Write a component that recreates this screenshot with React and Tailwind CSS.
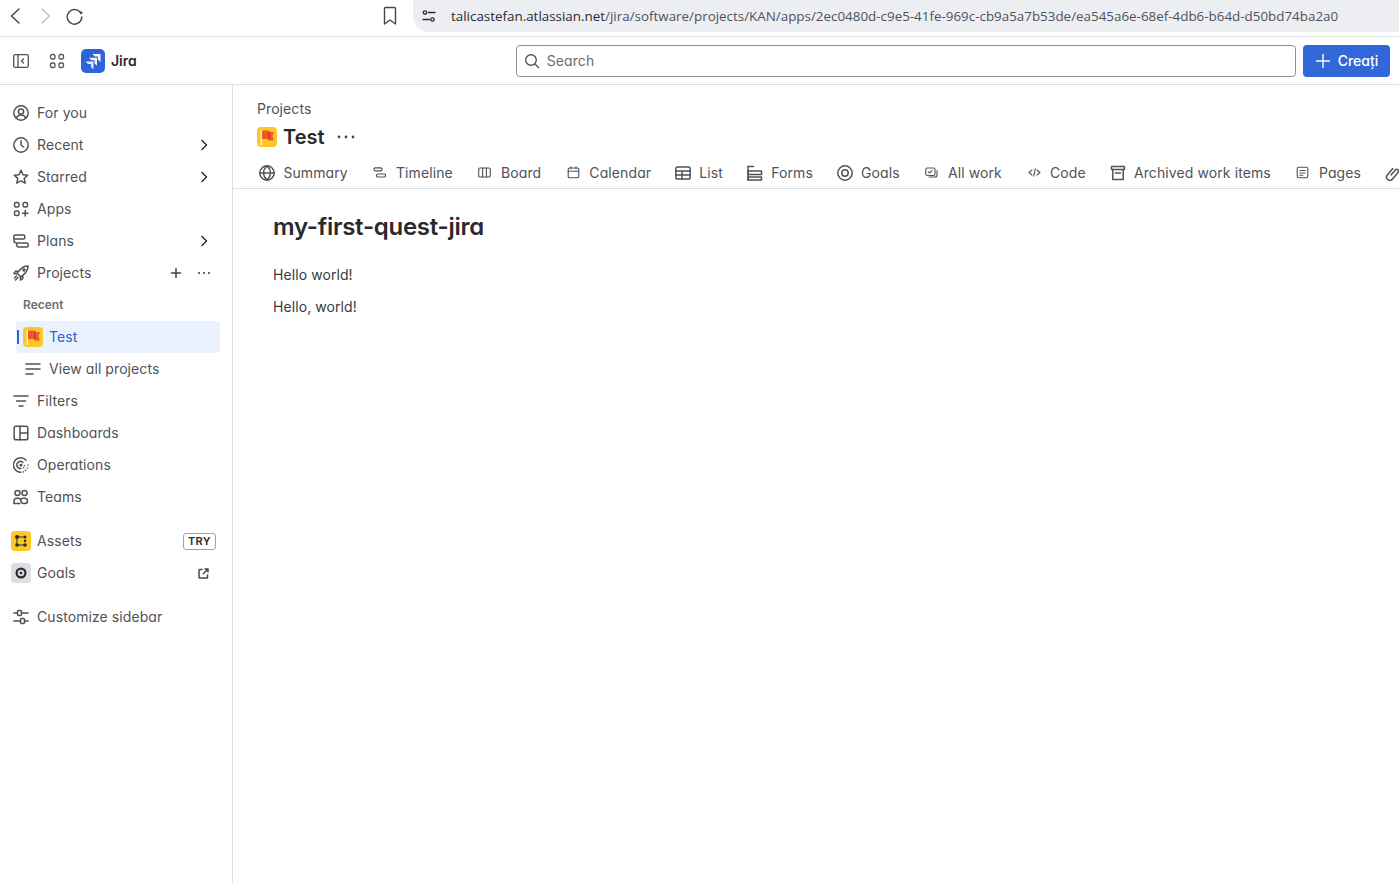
import React from "react";

const S = ({ children, size = 16, vb = 16, cls = "" }) => (
  <svg width={size} height={size} viewBox={`0 0 ${vb} ${vb}`} fill="none" stroke="currentColor" strokeWidth="1.5" strokeLinecap="round" strokeLinejoin="round" className={`shrink-0 ${cls}`}>
    {children}
  </svg>
);

const Ic = {
  user: <S><circle cx="8" cy="8" r="7.2" /><circle cx="8" cy="6.5" r="2.6" /><path d="M3.4 13c.6-2 2.2-3 4.6-3s4 1 4.6 3" /></S>,
  clock: <S><circle cx="8" cy="8" r="7.2" /><path d="M8 3.8V8l2.6 2" /></S>,
  star: <S><path d="M8 1.2l2 4.5 4.8.5-3.6 3.2 1 4.8L8 11.9l-4.2 2.3 1-4.8L1.2 6.2 6 5.7z" /></S>,
  apps: <S><rect x="1.5" y="1.5" width="4.5" height="4.5" rx="1.5" /><rect x="10" y="1.5" width="4.5" height="4.5" rx="1.5" /><rect x="1.5" y="10" width="4.5" height="4.5" rx="1.5" /><path d="M12.2 9.5v5.5M9.5 12.2H15" /></S>,
  plans: <S><rect x="0.8" y="2" width="11" height="4" rx="1.5" /><rect x="3.8" y="10" width="11.4" height="4" rx="1.5" /><path d="M1 6v2c0 1.200.8 2 2.800 2" /></S>,
  rocket: <S><path d="M15 1c-4 0-6.500 1.500-9 5L4 8l4 4 2-2c3.500-2.500 5-5 5-9z" /><path d="M5.500 6.200H2.500L1 8.500l3 .3M9.800 10.500v3l-2.300 1.500-.3-3" /><path d="M3.500 11l-2 2M5 12.500L2.500 15" /><circle cx="11" cy="5" r="1" /></S>,
  filter: <S><path d="M1 3h14M3.500 8h9M6 13h4" /></S>,
  listLines: <S><path d="M1 3h14M1 8h14M1 13h7" /></S>,
  dash: <S><rect x="1.200" y="1.200" width="13.600" height="13.600" rx="1.800" /><path d="M7 1.200v13.600M7 8h7.800" /></S>,
  ops: <S><path d="M13 3.200A7.200 7.200 0 1 0 8 15.200" /><path d="M10 5.500A3.600 3.600 0 1 0 8 11.500" /><circle cx="8" cy="8" r="0.800" /><path d="M15 8v.1M14.300 11v.1M12.500 13.300v.1M10.500 14.800v.1M11.500 8.500v.1M10.700 10.600v.1" /></S>,
  teams: <S><circle cx="4.500" cy="4" r="2.500" /><circle cx="11.500" cy="4" r="2.500" /><path d="M1 14.500v-2.200c0-1.800 1.200-3 3-3h1.500c1.500 0 2 1 2.500 2.700.500 1.700 1 2.500 2.500 2.500h1c1.500 0 3-.5 3-2.200 0-1.800-1.200-3-3-3h-1.500c-1 0-1.800.5-2.200 1.500" /><path d="M1 14.500h6" /></S>,
  custom: <S><path d="M0.800 4h3.700M8.500 4h6.700M0.800 12h6.700M11.500 12h3.700" /><rect x="4.500" y="1.500" width="4" height="5" rx="1" /><rect x="7.500" y="9.500" width="4" height="5" rx="1" /></S>,
  chev: <S size={16}><path d="M6 3.500L10.500 8 6 12.500" /></S>,
  globe: <S><circle cx="8" cy="8" r="7.200" /><path d="M.8 8h14.400M8 .8c-4.500 4.500-4.500 9.900 0 14.400M8 .8c4.500 4.500 4.500 9.900 0 14.400" /></S>,
  timeline: <S size={13} vb={13}><rect x="1" y="1.800" width="8" height="3" rx="1.300" strokeWidth="1.200" /><rect x="3.500" y="8" width="9" height="3" rx="1.300" strokeWidth="1.200" /></S>,
  board: <S size={13} vb={13}><rect x="0.700" y="2" width="11.600" height="9" rx="1.300" strokeWidth="1.100" /><path d="M4.600 2v9M8.400 2v9" strokeWidth="1.100" /></S>,
  cal: <S size={13} vb={13}><rect x="1.200" y="2" width="10.600" height="9.800" rx="1.300" strokeWidth="1.100" /><path d="M1.200 5.200h10.600M4 .8v2M9 .8v2" strokeWidth="1.100" /></S>,
  list: <S><rect x="0.800" y="2" width="14.400" height="12" rx="1.800" /><path d="M.8 6h14.400M.8 10h14.400M7 6v8" /></S>,
  forms: <S><path d="M1 1.500h5.500M1 6h13.500v3.500H1zM1 12h13.500v3H1z" /><path d="M1 1.500V15" /></S>,
  target: <S><circle cx="8" cy="8" r="7.200" /><circle cx="8" cy="8" r="3.200" /></S>,
  allwork: <S size={13} vb={13}><rect x="0.800" y="2" width="9.200" height="7.500" rx="1.500" strokeWidth="1.100" /><path d="M3.500 5.800l1.200 1.200 2.300-2.400" strokeWidth="1.100" /><path d="M12 4.500v4.500c0 1.400-.7 2-2 2H4" strokeWidth="1.100" /></S>,
  code: <S size={13} vb={13}><path d="M4 3.800L1 6.500l3 2.500M9 4l3 2.500L9 9M7.300 2.800L5.700 10.200" strokeWidth="1.100" /></S>,
  archive: <S><rect x="1.500" y="1.500" width="13" height="3" rx="0.500" /><path d="M2.800 4.500V14.500h10.400V4.500M5.500 8h5" /></S>,
  pages: <S size={13} vb={13}><rect x="1.200" y="1.200" width="10.600" height="10.600" rx="1.500" strokeWidth="1.100" /><path d="M3.800 4.500h5.400M3.800 7h5.400M3.800 9.300h3" strokeWidth="1.100" /></S>,
  link: <S><path d="M6 10l4.500-5.200a1.900 1.900 0 0 1 2.800 2.500l-6 7a3.300 3.300 0 0 1-5-4.300l5.500-6.500" /></S>,
};

const Flag = () => (
  <span className="flex h-5 w-5 shrink-0 overflow-hidden rounded-[4px] bg-[#fbc828]">
    <svg width="20" height="20" viewBox="0 0 20 20">
      <rect x="3.500" y="3" width="1.500" height="15" fill="#fdeeb8" />
      <path d="M5 3.500h7.500v1.500H17l-1.600 4.200L17 13.500h-6v-1.500H5z" fill="#ee5a2c" />
      <path d="M11 5h1.500v7H11z" fill="#c9401e" />
    </svg>
  </span>
);

const Row = ({ icon, label, right, indent = false }) => (
  <div className={`flex h-8 items-center text-[#505258] ${indent ? "pl-[25px]" : "pl-[13px]"}`}>
    <span className="flex w-4 justify-center">{icon}</span>
    <span className="ml-2 text-sm tracking-[0.08px]">{label}</span>
    {right}
  </div>
);

const Chev = () => <span className="ml-auto mr-[20px] flex text-[#292a2e]">{Ic.chev}</span>;

const tabs = [
  [Ic.globe, "Summary"],
  [Ic.timeline, "Timeline"],
  [Ic.board, "Board"],
  [Ic.cal, "Calendar"],
  [Ic.list, "List"],
  [Ic.forms, "Forms"],
  [Ic.target, "Goals"],
  [Ic.allwork, "All work"],
  [Ic.code, "Code"],
  [Ic.archive, "Archived work items"],
  [Ic.pages, "Pages"],
];

export default function App() {
  return (
    <div className="flex h-[883px] flex-col overflow-hidden bg-white font-['Inter',sans-serif] [font-feature-settings:'cv11'] text-[#292a2e]">
      {/* Browser bar */}
      <div className="flex h-[37px] shrink-0 items-start border-b border-[#e3e4e6] pl-[7px]">
        <div className="flex h-8 items-center text-[#45474b]">
          <svg width="16" height="18" viewBox="0 0 16 18" fill="none" stroke="currentColor" strokeWidth="1.500" strokeLinecap="round" strokeLinejoin="round"><path d="M12 2L4.500 9l7.500 7" /></svg>
          <svg className="ml-[14px] text-[#c3c4c7]" width="16" height="18" viewBox="0 0 16 18" fill="none" stroke="currentColor" strokeWidth="1.500" strokeLinecap="round" strokeLinejoin="round"><path d="M5 2l7.500 7L5 16" /></svg>
          <svg className="ml-[12px]" width="19" height="18" viewBox="0 0 19 18" fill="none" stroke="currentColor" strokeWidth="1.400" strokeLinecap="round"><path d="M16 6.500A7.300 7.300 0 1 0 16.800 10" /><circle cx="16.200" cy="5.800" r="1.300" fill="currentColor" stroke="none" /></svg>
        </div>
        <div className="ml-[298px] flex h-8 items-center text-[#45474b]">
          <svg width="16" height="20" viewBox="0 0 16 20" fill="none" stroke="currentColor" strokeWidth="1.400" strokeLinejoin="round"><path d="M2.500 2.500c0-.6.400-1 1-1h9c.6 0 1 .4 1 1V18L8 14l-5.500 4z" /></svg>
        </div>
        <div className="ml-[15px] flex h-8 flex-1 items-center rounded-bl-[16px] bg-[#edeef2] pl-[8px] text-[#292a2e]">
          <svg width="16" height="16" viewBox="0 0 16 16" fill="none" stroke="currentColor" strokeWidth="1.300" strokeLinecap="round"><circle cx="4" cy="4.500" r="1.700" /><path d="M7.500 4.500H14M2 11.500h6.500" /><circle cx="11.500" cy="11.500" r="1.700" /></svg>
          <span className="ml-[14px] mt-[1px] whitespace-nowrap font-['Open_Sans',sans-serif] text-[13.4px]">
            talicastefan.atlassian.net<span className="text-[#50525a]">/jira/software/projects/KAN/apps/2ec0480d-c9e5-41fe-969c-cb9a5a7b53de/ea545a6e-68ef-4db6-b64d-d50bd74ba2a0</span>
          </span>
        </div>
      </div>

      {/* App header */}
      <div className="flex h-[48px] shrink-0 items-center border-b border-[#dddee1] pl-[13px] pr-[9px]">
        <span className="flex text-[#505258]">
          <svg width="16" height="16" viewBox="0 0 16 16" fill="none" stroke="currentColor" strokeWidth="1.300" strokeLinecap="round" strokeLinejoin="round"><rect x="0.700" y="1.700" width="14.600" height="12.600" rx="1.500" /><path d="M5 1.700v12.600M10.500 6L8.500 8l2 2" /></svg>
        </span>
        <span className="ml-5 flex text-[#505258]">
          <svg width="16" height="16" viewBox="0 0 16 16" fill="none" stroke="currentColor" strokeWidth="1.300"><rect x="1.500" y="1.500" width="4.500" height="4.500" rx="1.500" /><rect x="10" y="1.500" width="4.500" height="4.500" rx="1.500" /><rect x="1.500" y="10" width="4.500" height="4.500" rx="1.500" /><rect x="10" y="10" width="4.500" height="4.500" rx="1.500" /></svg>
        </span>
        <span className="ml-4 flex h-6 w-6 items-center justify-center rounded-[5px] bg-[#2f64d8]">
          <svg width="24" height="24" viewBox="0 0 24 24" fill="white">
            <path d="M11.500 5H19.500V13L17 10.500V7.500H14z" />
            <path d="M8 8.800H16V16.800L13.500 14.300V11.300H10.500z" opacity="0.92" />
            <path d="M4.500 12.500H12.500V20.500L10 18V15H7z" opacity="0.85" />
          </svg>
        </span>
        <span className="ml-[6px] text-sm font-semibold text-[#292a2e]">Jira</span>
        <div className="ml-[379px] flex h-8 flex-1 items-center rounded-[4px] border border-[#8c8f97] pl-[7px] text-[#505258]">
          <svg width="16" height="16" viewBox="0 0 16 16" fill="none" stroke="currentColor" strokeWidth="1.400" strokeLinecap="round"><circle cx="7" cy="7" r="5.300" /><path d="M11 11l3.500 3.500" /></svg>
          <span className="ml-[7px] text-sm tracking-[0.08px] text-[#6b6e76]">Search</span>
        </div>
        <div className="ml-[7px] flex h-8 w-[87px] items-center justify-center gap-[7px] rounded-[4px] bg-[#3267d9] text-white">
          <svg width="16" height="16" viewBox="0 0 16 16" fill="none" stroke="currentColor" strokeWidth="1.400" strokeLinecap="round"><path d="M8 1.500v13M1.500 8h13" /></svg>
          <span className="text-sm font-medium">Creați</span>
        </div>
      </div>

      <div className="flex min-h-0 flex-1">
        {/* Sidebar */}
        <aside className="w-[233px] shrink-0 border-r border-[#dddee1] pt-3">
          <Row icon={Ic.user} label="For you" />
          <Row icon={Ic.clock} label="Recent" right={<Chev />} />
          <Row icon={Ic.star} label="Starred" right={<Chev />} />
          <Row icon={Ic.apps} label="Apps" />
          <Row icon={Ic.plans} label="Plans" right={<Chev />} />
          <Row
            icon={Ic.rocket}
            label="Projects"
            right={
              <span className="ml-auto mr-[20px] flex items-center gap-3 text-[#45474b]">
                <svg width="16" height="16" viewBox="0 0 16 16" fill="none" stroke="currentColor" strokeWidth="1.500" strokeLinecap="round"><path d="M8 3.500v9M3.500 8h9" /></svg>
                <svg width="16" height="16" viewBox="0 0 16 16" fill="currentColor"><circle cx="3" cy="8" r="1.100" /><circle cx="8" cy="8" r="1.100" /><circle cx="13" cy="8" r="1.100" /></svg>
              </span>
            }
          />
          <div className="flex h-8 items-center pl-[23px] text-xs font-semibold text-[#6b6e76]">Recent</div>
          <div className="relative ml-4 mr-3 flex h-8 items-center rounded-[4px] bg-[#e9f2fe] pl-[7px]">
            <span className="absolute left-[1px] top-[9px] h-[14px] w-[2px] bg-[#2f64d8]" />
            <Flag />
            <span className="ml-[6px] text-sm tracking-[0.08px] text-[#2f5fd0]">Test</span>
          </div>
          <Row icon={Ic.listLines} label="View all projects" indent />
          <Row icon={Ic.filter} label="Filters" />
          <Row icon={Ic.dash} label="Dashboards" />
          <Row icon={Ic.ops} label="Operations" />
          <Row icon={Ic.teams} label="Teams" />
          <div className="h-3" />
          <div className="flex h-8 items-center pl-[11px] text-[#505258]">
            <span className="flex h-5 w-5 items-center justify-center rounded-[4px] bg-[#fbc828] text-[#292a2e]">
              <svg width="16" height="16" viewBox="0 0 16 16" fill="currentColor"><path d="M4 4h8M4 4v8M4 12h8M12 6.500v1" fill="none" stroke="currentColor" strokeWidth="1" /><circle cx="4" cy="4" r="2" /><circle cx="12" cy="4" r="1.500" /><circle cx="12" cy="8" r="1.200" /><circle cx="4" cy="12" r="1.800" /><circle cx="12" cy="12" r="1.800" /></svg>
            </span>
            <span className="ml-[6px] text-sm tracking-[0.08px]">Assets</span>
            <span className="ml-auto mr-4 flex h-[17px] w-[33px] items-center justify-center rounded-[3px] border border-[#c084ea] text-[11px] font-semibold tracking-[0.3px] text-[#292a2e]">TRY</span>
          </div>
          <div className="flex h-8 items-center pl-[11px] text-[#505258]">
            <span className="flex h-5 w-5 items-center justify-center rounded-[4px] bg-[#dddee1]">
              <svg width="12" height="12" viewBox="0 0 12 12" fill="none" stroke="#292a2e" strokeWidth="2.200"><circle cx="6" cy="6" r="4.400" /><circle cx="6" cy="6" r="1" fill="#292a2e" strokeWidth="1" /></svg>
            </span>
            <span className="ml-[6px] text-sm tracking-[0.08px]">Goals</span>
            <span className="ml-auto mr-[23px] flex text-[#45474b]">
              <svg width="11" height="11" viewBox="0 0 11 11" fill="none" stroke="currentColor" strokeWidth="1.500"><path d="M4.500 1.500H1.800c-.5 0-.8.300-.8.800v6.900c0 .5.300.8.800.8h6.900c.5 0 .8-.3.800-.8V6.500M6.500 1H10v3.500M10 1L5 6" /></svg>
            </span>
          </div>
          <div className="h-3" />
          <Row icon={Ic.custom} label="Customize sidebar" />
        </aside>

        {/* Main */}
        <main className="min-w-0 flex-1">
          <div className="pl-6 pt-[14px] text-sm leading-5 tracking-[0.08px] text-[#505258]">Projects</div>
          <div className="mt-[2px] flex h-[32px] items-center pl-6">
            <Flag />
            <span className="ml-[6px] text-xl font-semibold text-[#292a2e]">Test</span>
            <span className="ml-[11px] flex text-[#45474b]">
              <svg width="20" height="16" viewBox="0 0 20 16" fill="currentColor"><circle cx="3" cy="8" r="1.400" /><circle cx="10" cy="8" r="1.400" /><circle cx="17" cy="8" r="1.400" /></svg>
            </span>
          </div>
          <div className="mt-[4px] flex h-[32px] items-center gap-[24.15px] overflow-hidden border-b border-[#dddee1] pl-[26.4px]">
            {tabs.map(([icon, label]) => (
              <div key={label} className="flex shrink-0 items-center gap-2 text-[#505258]">
                <span className="flex w-4 justify-center">{icon}</span>
                <span className="text-sm tracking-[0.1px]">{label}</span>
              </div>
            ))}
            <span className="flex shrink-0 text-[#505258]">{Ic.link}</span>
          </div>
          <div className="pl-10 pt-[22px]">
            <h1 className="text-2xl font-semibold leading-8 tracking-[-0.27px] text-[#292a2e]">my-first-quest-jira</h1>
            <p className="mt-[22px] text-sm leading-5 tracking-[0.08px] text-[#3a3b40]">Hello world!</p>
            <p className="mt-3 text-sm leading-5 tracking-[0.08px] text-[#3a3b40]">Hello, world!</p>
          </div>
        </main>
      </div>
    </div>
  );
}
